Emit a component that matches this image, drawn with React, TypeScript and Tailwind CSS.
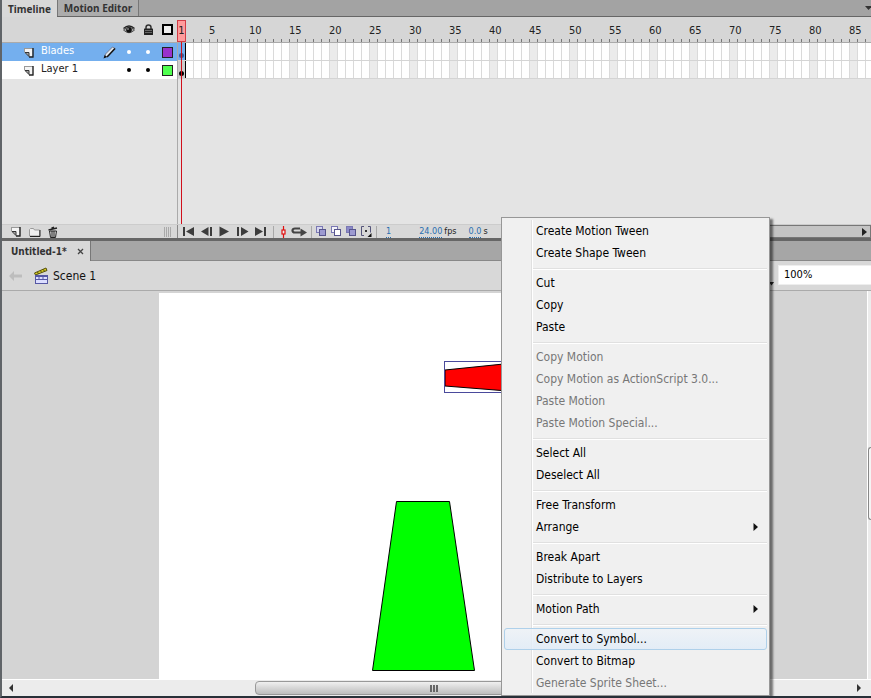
import React from "react";

const FRAMES = Array.from({ length: 240 }, (_, i) => i + 1);
const LABELS = Array.from({ length: 17 }, (_, i) => (i + 1) * 5);

type MenuEntry = { label: string; disabled?: boolean; submenu?: boolean; active?: boolean };

const MENU: MenuEntry[][] = [
  [{ label: "Create Motion Tween" }, { label: "Create Shape Tween" }],
  [{ label: "Cut" }, { label: "Copy" }, { label: "Paste" }],
  [
    { label: "Copy Motion", disabled: true },
    { label: "Copy Motion as ActionScript 3.0...", disabled: true },
    { label: "Paste Motion", disabled: true },
    { label: "Paste Motion Special...", disabled: true },
  ],
  [{ label: "Select All" }, { label: "Deselect All" }],
  [{ label: "Free Transform" }, { label: "Arrange", submenu: true }],
  [{ label: "Break Apart" }, { label: "Distribute to Layers" }],
  [{ label: "Motion Path", submenu: true }],
  [
    { label: "Convert to Symbol...", active: true },
    { label: "Convert to Bitmap" },
    { label: "Generate Sprite Sheet...", disabled: true },
  ],
];

function IconButton({ label, className, children }: { label: string; className: string; children: React.ReactNode }) {
  return (
    <button type="button" aria-label={label} className={`flex shrink-0 items-center justify-center ${className}`}>
      {children}
    </button>
  );
}

function PageIcon() {
  return (
    <svg width="10" height="11" viewBox="0 0 10 11" aria-hidden="true">
      <path d="M0.500 1.500h8v8h-3l-5-4z" fill="#f4f4f4" />
      <path d="M0 1.500h9" stroke="#999" />
      <path d="M0.500 2v3" stroke="#999" />
      <path d="M9 1v9.500M5 10h4.500" stroke="#222" strokeWidth="1.400" fill="none" />
      <path d="M1 5.500h4v4z" fill="#aaa" stroke="#333" />
    </svg>
  );
}

function EyeIcon() {
  return (
    <svg width="12" height="10" viewBox="0 0 12 10" aria-hidden="true">
      <path d="M0.500 5Q6-0.500 11.500 5Q6 10.500 0.500 5z" fill="#a4a4a4" stroke="#555" />
      <path d="M0.500 3.500Q6-1.500 11.500 3.500" fill="none" stroke="#222" strokeWidth="1.400" />
      <circle cx="6" cy="5" r="2.800" fill="#111" />
      <circle cx="5" cy="4" r="0.800" fill="#ccc" />
    </svg>
  );
}

function LockIcon() {
  return (
    <svg width="9" height="11" viewBox="0 0 9 11" aria-hidden="true">
      <path d="M2 5V3.500Q2 1 4.500 1T7 3.500V5" fill="none" stroke="#333" strokeWidth="1.500" />
      <rect x="0" y="4.500" width="9" height="6.500" rx="0.500" fill="#222" />
      <path d="M1 6.500h7M1 8.500h7" stroke="#666" />
    </svg>
  );
}

function PencilIcon() {
  return (
    <svg width="13" height="13" viewBox="0 0 13 13" aria-hidden="true">
      <path d="M1.500 11.500l1-3.500L9.500 1l2.500 1.500-6.500 7.500z" fill="#dfe8f0" stroke="#667" strokeWidth="0.800" />
      <path d="M4 11l8-8.500" stroke="#111" strokeWidth="1.500" />
      <path d="M0.500 12.500l1.200-3.500 2.300 2z" fill="#111" />
    </svg>
  );
}

function FolderIcon() {
  return (
    <svg width="12" height="10" viewBox="0 0 12 10" aria-hidden="true">
      <path d="M0.500 9V2.500l1-1h3l1 1.500h5V9z" fill="#eee" stroke="#999" />
      <path d="M11 3v6.500H1" fill="none" stroke="#222" />
    </svg>
  );
}

function TrashIcon() {
  return (
    <svg width="10" height="12" viewBox="0 0 10 12" aria-hidden="true">
      <path d="M0.500 4L9 2M3.500 2.300l2.500-1" stroke="#222" strokeWidth="1.500" />
      <path d="M1.500 5h7l-1 6.500h-5z" fill="#ddd" stroke="#222" />
      <path d="M4 5v6M6 5v6" stroke="#222" />
    </svg>
  );
}

function Arrow({ kind }: { kind: "first" | "back" | "play" | "next" | "last" }) {
  const shapes = {
    first: "M0 1h2v9H0zM11 1v9L3 5.500z",
    back: "M0 5.500L7.500 1v9zM9 1h2v9H9z",
    play: "M0.500 0.500v10l9.500-5z",
    next: "M0 1h2v9H0zM4 1v9l7.500-4.500z",
    last: "M0 1v9l8-4.500zM9 1h2v9H9z",
  };
  return (
    <svg width="12" height="11" viewBox="0 0 12 11" aria-hidden="true">
      <path d={shapes[kind]} fill="#3c3c3c" />
    </svg>
  );
}

function OnionIcon({ back, front }: { back: string; front: string }) {
  return (
    <svg width="11" height="11" viewBox="0 0 11 11" aria-hidden="true">
      <rect x="0.500" y="0.500" width="6" height="6" fill={back} stroke="#7a78b4" />
      <rect x="3.500" y="3.500" width="6" height="6" fill={front} stroke="#56548c" />
    </svg>
  );
}

function Divider({ className = "" }: { className?: string }) {
  return <span className={`h-3 w-px shrink-0 bg-[#a8a8a8] ${className}`} />;
}

function LayerRow({ name, selected, swatch }: { name: string; selected?: boolean; swatch: string }) {
  const dot = selected ? "bg-white" : "bg-black";
  return (
    <div className={`flex h-[18px] items-center ${selected ? "bg-[#74afee] text-white" : "bg-white text-[#222]"}`}>
      <span className="ml-[22px] flex w-[17px]">
        <PageIcon />
      </span>
      <button type="button" className="flex h-full w-[62px] items-start text-left text-[11px] leading-4">
        {name}
      </button>
      <span className="w-[18px]">{selected && <PencilIcon />}</span>
      <IconButton label={`Show ${name}`} className="h-full w-4">
        <span className={`size-1 rounded-full ${dot}`} />
      </IconButton>
      <IconButton label={`Lock ${name}`} className="h-full w-[22px]">
        <span className={`size-1 rounded-full ${dot}`} />
      </IconButton>
      <button
        type="button"
        aria-label={`Outline color of ${name}`}
        className={`ml-[3px] size-[11px] shrink-0 border border-[#222] ${swatch}`}
      />
    </div>
  );
}

function FrameRow({ selected }: { selected?: boolean }) {
  return (
    <div className="flex h-[18px] overflow-hidden border-b border-[#d4d4d4] bg-white">
      {FRAMES.map((f) => {
        if (f === 1) {
          return (
            <span
              key={f}
              className={`flex w-2 shrink-0 items-end border-r border-black pl-px ${selected ? "bg-[#74afee]" : "bg-[#ccc]"}`}
            >
              <span className={`mb-0.5 size-[5px] rounded-full ${selected ? "bg-[#3b5d96]" : "bg-black"}`} />
            </span>
          );
        }
        return <span key={f} className={`w-2 shrink-0 border-r border-[#dadada] ${f % 5 === 0 ? "bg-[#ebebeb]" : ""}`} />;
      })}
    </div>
  );
}

function Timeline() {
  return (
    <section aria-label="Timeline" className="flex h-[238px] shrink-0 flex-col">
      <div role="tablist" className="flex h-[17px] shrink-0 border-b border-[#666] bg-[#a3a3a3] text-[10px] leading-4 font-bold text-[#333]">
        <button type="button" role="tab" aria-selected="true" className="-mb-px w-[55px] bg-[#d8d8d8]">
          Timeline
        </button>
        <button type="button" role="tab" aria-selected="false" className="w-[82px] border-x border-[#777] bg-[#acacac]">
          Motion Editor
        </button>
        <IconButton label="Panel menu" className="ml-auto w-1.5">
          <svg width="6" height="4" viewBox="0 0 6 4" aria-hidden="true">
            <path d="M0 0h7L3.500 4z" fill="#333" />
          </svg>
        </IconButton>
      </div>
      <div className="flex min-h-0 flex-1 font-['DejaVu_Sans_Condensed',sans-serif]">
        <div className="w-[175px] shrink-0 bg-[#e4e4e4]">
          <div className="flex h-[26px] items-center border-b border-[#aaa] bg-[#d6d6d6]">
            <IconButton label="Show all layers" className="ml-[119px] w-4">
              <EyeIcon />
            </IconButton>
            <IconButton label="Lock all layers" className="w-[22px]">
              <LockIcon />
            </IconButton>
            <button type="button" aria-label="Show all layers as outlines" className="ml-[3px] size-[11px] border-2 border-black bg-[#eee]" />
          </div>
          <LayerRow name="Blades" selected swatch="bg-[#9932cc]" />
          <LayerRow name="Layer 1" swatch="bg-[#4fff4f]" />
        </div>
        <div className="relative min-w-0 flex-1 overflow-hidden bg-[#e4e4e4]">
          <div className="relative h-[26px] border-b border-[#aaa] bg-[#d6d6d6]">
            <div className="flex pt-[5px] pl-8 text-[11px] leading-[18px] text-[#222]">
              {LABELS.map((n) => (
                <span key={n} className="w-10 shrink-0">
                  {n}
                </span>
              ))}
            </div>
            <div className="absolute inset-x-0 bottom-0 flex h-[3px] overflow-hidden border-l border-[#aaa]">
              {FRAMES.map((f) => (
                <span key={f} className="w-2 shrink-0 border-r border-[#777]" />
              ))}
            </div>
          </div>
          <div className="border-l border-[#aaa]">
            <FrameRow selected />
            <FrameRow />
          </div>
          <span className="absolute top-[62px] bottom-0 left-0 w-px bg-[#aaa]" />
          <div className="absolute top-[3px] bottom-0 left-0 z-10 flex w-[9px] flex-col">
            <span className="h-[22px] shrink-0 border border-[#d23c46] bg-[#ff9c9c] text-center text-[11px] leading-[20px] text-[#222]">1</span>
            <span className="mx-1 flex-1 bg-[#d0101c]" />
          </div>
        </div>
      </div>
      <div className="flex h-[14px] shrink-0 items-center border-t border-[#ccc] bg-[#d8d8d8]">
        <div className="flex h-full w-[175px] shrink-0 items-center">
          <IconButton label="New layer" className="ml-2 w-3">
            <PageIcon />
          </IconButton>
          <IconButton label="New folder" className="ml-[7px] w-3">
            <FolderIcon />
          </IconButton>
          <IconButton label="Delete" className="ml-1.5 w-3">
            <TrashIcon />
          </IconButton>
          <span className="mr-1.5 ml-auto flex h-2.5 w-[7px] justify-between border-x border-[#aaa] px-px">
            <span className="w-px bg-[#aaa]" />
            <span className="w-px bg-[#aaa]" />
          </span>
        </div>
        <div className="flex h-full w-[324px] shrink-0 items-center border-l border-[#888] font-['DejaVu_Sans_Condensed',sans-serif] text-[9px] leading-[11px]">
          <div className="flex w-[94px] shrink-0 items-center gap-1.5 pl-[5px]">
            <IconButton label="Go to first frame" className="w-3"><Arrow kind="first" /></IconButton>
            <IconButton label="Step back" className="w-3"><Arrow kind="back" /></IconButton>
            <IconButton label="Play" className="w-3"><Arrow kind="play" /></IconButton>
            <IconButton label="Step forward" className="w-3"><Arrow kind="next" /></IconButton>
            <IconButton label="Go to last frame" className="w-3"><Arrow kind="last" /></IconButton>
          </div>
          <Divider className="ml-px" />
          <IconButton label="Center frame" className="ml-[7px] w-[5px]">
            <svg width="5" height="12" viewBox="0 0 5 12" aria-hidden="true">
              <path d="M2.500 0v12" stroke="#e01010" strokeWidth="1.200" />
              <rect x="1" y="4" width="3" height="4" fill="#eee" stroke="#e01010" strokeWidth="1.200" />
            </svg>
          </IconButton>
          <IconButton label="Loop" className="ml-[5px] w-4">
            <svg width="16" height="11" viewBox="0 0 16 11" aria-hidden="true">
              <path d="M9 2.500H4Q1.500 2.500 1.500 4.500T4 6.500H11" fill="none" stroke="#444" strokeWidth="2.200" />
              <path d="M9.500 2.500l6.500 4-6.500 4z" fill="#444" />
            </svg>
          </IconButton>
          <Divider className="mr-1 ml-1" />
          <div className="flex gap-1">
            <IconButton label="Onion skin" className="w-[11px]"><OnionIcon back="#d6d6ee" front="#9c9ad0" /></IconButton>
            <IconButton label="Onion skin outlines" className="w-[11px]"><OnionIcon back="#f4f4fa" front="#fff" /></IconButton>
            <IconButton label="Edit multiple frames" className="w-[11px]"><OnionIcon back="#8c8ac8" front="#9c9ad0" /></IconButton>
            <IconButton label="Modify markers" className="w-[11px]">
              <svg width="11" height="11" viewBox="0 0 11 11" aria-hidden="true">
                <path d="M3 0.500H0.500v9H3M7 0.500h2.500v6" fill="none" stroke="#55557a" />
                <rect x="4" y="4" width="2" height="2" fill="#333" />
                <path d="M10.500 7v4h-4z" fill="#111" />
              </svg>
            </IconButton>
          </div>
          <Divider className="ml-1" />
          <button type="button" className="ml-[9px] border-b border-dotted border-[#2a6fb0] text-[#2a6fb0]">1</button>
          <button type="button" className="ml-7 border-b border-dotted border-[#2a6fb0] text-[#2a6fb0]">24.00</button>
          <span className="ml-0.5 text-[#222]">fps</span>
          <button type="button" className="ml-3 border-b border-dotted border-[#2a6fb0] text-[#2a6fb0]">0.0</button>
          <span className="ml-0.5 text-[#222]">s</span>
        </div>
        <div className="flex h-full flex-1 items-center justify-end border border-[#777] bg-[#c4c4c4] pr-[3px]">
          <IconButton label="Scroll frames right" className="w-1.5">
            <svg width="5" height="8" viewBox="0 0 5 8" aria-hidden="true">
              <path d="M0 0v8l5-4z" fill="#222" />
            </svg>
          </IconButton>
        </div>
      </div>
    </section>
  );
}

function SceneIcon() {
  return (
    <svg width="15" height="18" viewBox="0 0 15 18" aria-hidden="true">
      <path d="M0.500 6L12 1l1 2.500L1.500 8z" fill="#d8cc20" stroke="#555010" />
      <path d="M3.500 5l1 2M6.500 3.500l1 2M9.500 2.500l1 2" stroke="#555010" />
      <rect x="1.500" y="8.500" width="12" height="8" fill="#dcdeff" stroke="#5658a4" />
      <path d="M1 9h13" stroke="#5658a4" strokeWidth="2" />
      <path d="M1 12.500h13M5 12v-2M9 12v-2" stroke="#5658a4" />
    </svg>
  );
}

function ContextMenu() {
  return (
    <div
      role="menu"
      className="absolute top-[217px] left-[501px] w-[269px] border border-[#979797] bg-[#f0f0f0] px-0.5 pt-0.5 pb-px font-['DejaVu_Sans_Condensed',sans-serif] text-[12px] leading-[22px] text-black shadow-[3px_2px_2px_rgba(0,0,0,0.5)]"
    >
      <span className="absolute inset-y-0.5 left-[29px] w-0.5 border-l border-[#e0e0e0] bg-white" />
      {MENU.map((group, gi) => (
        <div key={gi} role="group">
          {gi > 0 && (
            <div className="flex h-2 items-end pb-0.5 pl-[29px]">
              <span className="h-0.5 flex-1 border-t border-[#e0e0e0] bg-white" />
            </div>
          )}
          {group.map((item) => (
            <button
              key={item.label}
              type="button"
              role="menuitem"
              disabled={item.disabled}
              className={`relative flex h-[22px] w-full items-center justify-between pr-[9px] pl-8 text-left whitespace-nowrap ${item.disabled ? "text-[#777]" : ""}`}
            >
              {item.active && (
                <span className="absolute inset-0 rounded-[3px] border border-[#aed0ea] bg-linear-to-b from-[#eef3f8]/80 to-[#e0ecf8]/80" />
              )}
              <span className="relative">{item.label}</span>
              {item.submenu && (
                <svg width="5" height="8" viewBox="0 0 5 8" aria-hidden="true">
                  <path d="M0.500 0v8l4.500-4z" fill="#111" />
                </svg>
              )}
            </button>
          ))}
        </div>
      ))}
    </div>
  );
}

function Editor() {
  return (
    <section aria-label="Document" className="flex min-h-0 flex-1 flex-col">
      <div className="flex h-5 shrink-0 border-b border-[#888] bg-[#a6a6a6] text-[11px] leading-[19px] font-bold text-[#333]">
        <div className="-mb-px flex w-[89px] items-center border-r border-[#777] bg-[#d8d8d8] pl-[9px] font-['DejaVu_Sans_Condensed',sans-serif] text-[10px]">
          <button type="button">Untitled-1*</button>
          <IconButton label="Close Untitled-1" className="mr-1.5 ml-auto w-2">
            <svg width="7" height="7" viewBox="0 0 7 7" aria-hidden="true">
              <path d="M1 1l5 5M6 1L1 6" stroke="#444" strokeWidth="1.300" />
            </svg>
          </IconButton>
        </div>
      </div>
      <div className="flex h-[30px] shrink-0 items-center border-b border-[#aaa] bg-[#d8d8d8] font-['DejaVu_Sans_Condensed',sans-serif]">
        <IconButton label="Back" className="ml-[7px] w-[13px]">
          <svg width="13" height="10" viewBox="0 0 13 10" aria-hidden="true">
            <path d="M0 5l5-5v3.500h8v3H5V10z" fill="#bdbdbd" />
          </svg>
        </IconButton>
        <button type="button" className="ml-3 flex items-center gap-1 text-[12px] text-[#111]">
          <SceneIcon />
          Scene 1
        </button>
        <svg width="5" height="4" viewBox="0 0 5 4" className="mt-4 mr-1 ml-auto" aria-hidden="true">
          <path d="M0 0h5L2.500 3.500z" fill="#222" />
        </svg>
        <input
          aria-label="Zoom"
          defaultValue="100%"
          className="mb-0.5 h-5 w-[93px] border-y border-l border-[#eee] bg-white pl-[5px] text-[11px] text-black"
        />
      </div>
      <div className="flex min-h-0 flex-1">
        <div className="flex min-w-0 flex-1 overflow-hidden bg-[#d4d4d4] pt-0.5 pl-[157px]">
          <svg className="h-full w-[550px] shrink-0 bg-white" role="img" aria-label="Stage">
            <path d="M237.500 208.500h53l25 169h-102z" fill="#00ff00" stroke="#000" />
            <path d="M286 77L374 68v32L286 93z" fill="#ff0000" stroke="#000" />
            <rect x="285.500" y="68.500" width="90" height="31" fill="none" stroke="#4a4a9c" />
          </svg>
        </div>
        <div className="w-1 shrink-0 border-l border-white bg-[#ececec] pt-[156px]">
          <div className="h-[73px] rounded-l-sm border border-r-0 border-[#888] bg-[#f4f4f4]" />
        </div>
      </div>
      <div className="flex h-[17px] shrink-0 items-center border-t border-white bg-[#ececec]">
        <IconButton label="Scroll left" className="ml-1.5 w-1.5">
          <svg width="4" height="8" viewBox="0 0 4 8" aria-hidden="true">
            <path d="M4 0v8L0 4z" fill="#333" />
          </svg>
        </IconButton>
        <div className="ml-[241px] flex h-[14px] w-[357px] items-center justify-center gap-px rounded-sm border border-[#999] bg-linear-to-b from-[#f0f0f0] to-[#bdbdbd]">
          <span className="h-[7px] w-0.5 bg-[#666]" />
          <span className="h-[7px] w-0.5 bg-[#666]" />
          <span className="h-[7px] w-0.5 bg-[#666]" />
        </div>
        <IconButton label="Scroll right" className="mr-2.5 ml-auto w-1">
          <svg width="4" height="8" viewBox="0 0 4 8" aria-hidden="true">
            <path d="M0 0v8l4-4z" fill="#333" />
          </svg>
        </IconButton>
      </div>
    </section>
  );
}

export default function App() {
  return (
    <main className="relative flex h-screen flex-col gap-[3px] overflow-hidden border-b-2 border-l-2 border-[#606468] border-b-[#283038] bg-[#666] font-['Noto_Sans',sans-serif]">
      <Timeline />
      <Editor />
      <div className="absolute inset-y-0 -left-0.5">
        <ContextMenu />
      </div>
    </main>
  );
}
